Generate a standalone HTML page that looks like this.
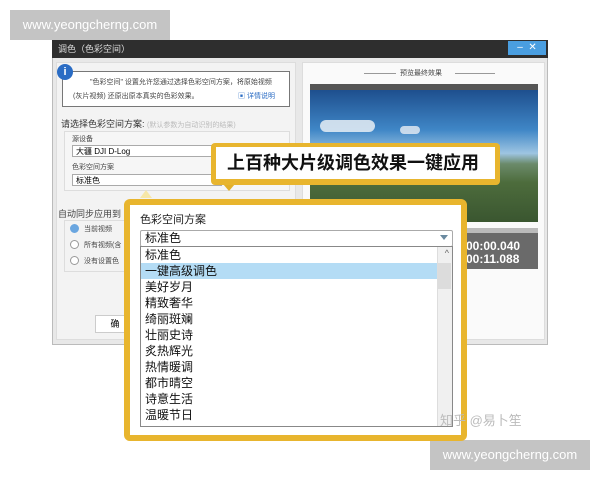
<!DOCTYPE html>
<html><head><meta charset="utf-8"><style>
*{margin:0;padding:0;box-sizing:border-box}
body{width:600px;height:480px;background:#fff;position:relative;overflow:hidden;font-family:"Liberation Sans","Noto Sans CJK SC",sans-serif;}
.a{position:absolute;white-space:nowrap}
.wm{background:#c4c4c4;color:#fff;font-size:13px;line-height:30px;text-align:center}
.s{font-size:7px;color:#444}
.inp{background:#fff;border:1px solid #aaa;font-size:8px;padding-left:3px;line-height:11px}
.rad{width:9px;height:9px;border:1px solid #999;border-radius:50%;background:#fff}
.li{position:absolute;left:4px;font-size:12px;color:#111;line-height:16px}
</style></head><body>
<div class="a wm" style="left:10px;top:10px;width:160px;height:30px">www.yeongcherng.com</div>
<div class="a wm" style="left:430px;top:440px;width:160px;height:30px">www.yeongcherng.com</div>

<div class="a" style="left:52px;top:40px;width:496px;height:305px;background:#e8e8e8;border:1px solid #bbb"></div>
<div class="a" style="left:52px;top:40px;width:496px;height:18px;background:#2e2e2e;color:#ddd;font-size:9px;line-height:18px;padding-left:6px">调色（色彩空间）</div>
<div class="a" style="left:508px;top:41px;width:38px;height:14px;background:#4a9ee0;color:#fff;font-size:10px;line-height:14px;text-align:center">–&nbsp;&nbsp;✕</div>

<div class="a" style="left:56px;top:62px;width:240px;height:278px;background:#f3f3f3;border:1px solid #ddd"></div>
<div class="a" style="left:62px;top:71px;width:228px;height:36px;background:#fff;border:1px solid #777"></div>
<div class="a" style="left:57px;top:64px;width:16px;height:16px;border-radius:50%;background:#2a6cc4;color:#fff;font-size:11px;font-weight:bold;text-align:center;line-height:16px">i</div>
<div class="a s" style="left:90px;top:77px">"色彩空间" 设置允许您通过选择色彩空间方案，将原始视频</div>
<div class="a s" style="left:73px;top:91px">(灰片视频) 还原出原本真实的色彩效果。</div>
<div class="a s" style="left:238px;top:91px;color:#2a6cc4">▣ 详情说明</div>
<div class="a" style="left:61px;top:117px;font-size:9px;color:#333">请选择色彩空间方案: <span style="color:#bbb;font-size:7px">(默认参数为自动识别的结果)</span></div>
<div class="a" style="left:64px;top:131px;width:226px;height:60px;border:1px solid #ddd;background:#f6f6f6"></div>
<div class="a s" style="left:72px;top:134px">源设备</div>
<div class="a inp" style="left:72px;top:145px;width:150px;height:12px">大疆 DJI D-Log</div>
<div class="a s" style="left:72px;top:162px">色彩空间方案</div>
<div class="a inp" style="left:72px;top:174px;width:150px;height:12px">标准色</div>
<div class="a" style="left:58px;top:207px;font-size:9px;color:#444">自动同步应用到</div>
<div class="a" style="left:64px;top:220px;width:226px;height:52px;border:1px solid #ddd"></div>
<div class="a rad" style="left:70px;top:224px;background:#6aa6e0;border-color:#6aa6e0"></div><div class="a s" style="left:84px;top:224px">当前视频</div>
<div class="a rad" style="left:70px;top:240px"></div><div class="a s" style="left:84px;top:240px">所有视频(含</div>
<div class="a rad" style="left:70px;top:256px"></div><div class="a s" style="left:84px;top:256px">没有设置色</div>
<div class="a" style="left:95px;top:315px;width:40px;height:18px;background:#fff;border:1px solid #ccc;font-size:9px;line-height:16px;text-align:center">确</div>

<div class="a" style="left:302px;top:62px;width:243px;height:278px;background:#fafafa;border:1px solid #ddd"></div>
<div class="a" style="left:364px;top:73px;width:32px;border-top:1px solid #999"></div>
<div class="a s" style="left:400px;top:68px">预览最终效果</div>
<div class="a" style="left:455px;top:73px;width:40px;border-top:1px solid #999"></div>
<div class="a" style="left:310px;top:84px;width:228px;height:6px;background:#555"></div>
<div class="a" style="left:310px;top:90px;width:228px;height:132px;background:linear-gradient(#1e4f8e 0%,#3f86c6 30%,#9ec5e2 48%,#6b8a6a 56%,#4d6c3c 70%,#3a5630 100%)"></div>
<div class="a" style="left:320px;top:120px;width:55px;height:12px;border-radius:8px;background:#e8eef4;opacity:.85"></div>
<div class="a" style="left:400px;top:126px;width:20px;height:8px;border-radius:5px;background:#e8eef4;opacity:.8"></div>
<div class="a" style="left:310px;top:228px;width:228px;height:5px;background:#bbb"></div>
<div class="a" style="left:310px;top:233px;width:228px;height:36px;background:#6a6a6a"></div>
<div class="a" style="left:462px;top:240px;color:#fff;font-size:12px;line-height:13px;font-weight:bold">:00:00.040<br>:00:11.088</div>

<div class="a" style="left:140px;top:190px;width:0;height:0;border-left:6px solid transparent;border-right:6px solid transparent;border-bottom:8px solid #f6e7a8"></div>
<div class="a" style="left:223px;top:184px;width:0;height:0;border-left:6px solid transparent;border-right:6px solid transparent;border-top:7px solid #e2b02a"></div>
<div class="a" style="left:211px;top:143px;width:289px;height:42px;background:#e8b52e;border-radius:4px"></div>
<div class="a" style="left:216px;top:147px;width:279px;height:32px;background:#fff;font-size:18px;font-weight:bold;color:#111;line-height:32px;padding-left:11px">上百种大片级调色效果一键应用</div>

<div class="a" style="left:124px;top:199px;width:343px;height:242px;background:#e8b52e;border-radius:6px"></div>
<div class="a" style="left:130px;top:205px;width:331px;height:230px;background:#fff"></div>
<div class="a" style="left:140px;top:211px;font-size:11px;color:#222">色彩空间方案</div>
<div class="a" style="left:140px;top:230px;width:313px;height:17px;border:1px solid #aaa;border-radius:2px;background:#fff"><span class="li" style="top:0;line-height:15px">标准色</span><span style="position:absolute;right:4px;top:4px;border-left:4px solid transparent;border-right:4px solid transparent;border-top:5px solid #6a8aa0"></span></div>
<div class="a" style="left:140px;top:246px;width:313px;height:181px;border:1px solid #888;background:#fff">
<div style="position:absolute;left:0;top:16px;width:296px;height:16px;background:#b4dcf5"></div>
<div class="li" style="top:0">标准色</div>
<div class="li" style="top:16px">一键高级调色</div>
<div class="li" style="top:32px">美好岁月</div>
<div class="li" style="top:48px">精致奢华</div>
<div class="li" style="top:64px">绮丽斑斓</div>
<div class="li" style="top:80px">壮丽史诗</div>
<div class="li" style="top:96px">炙热辉光</div>
<div class="li" style="top:112px">热情暖调</div>
<div class="li" style="top:128px">都市晴空</div>
<div class="li" style="top:144px">诗意生活</div>
<div class="li" style="top:160px">温暖节日</div>
<div style="position:absolute;right:0;top:0;width:15px;height:179px;background:#f0f0f0;border-left:1px solid #ddd"></div>
<div style="position:absolute;right:1px;top:16px;width:13px;height:26px;background:#dcdcdc"></div>
<div style="position:absolute;right:3px;top:1px;font-size:9px;color:#666">^</div>
</div>
<div class="a" style="left:440px;top:410px;font-size:13px;color:#bbb">知乎 @易卜笙</div>
</body></html>
